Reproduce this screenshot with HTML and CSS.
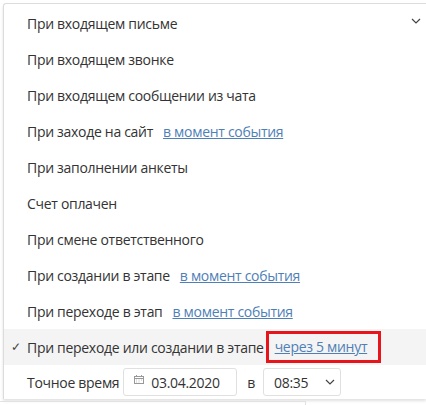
FILE: index.html
```html
<!DOCTYPE html>
<html lang="ru">
<head>
<meta charset="utf-8">
<link rel="stylesheet" href="styles.css">
</head>
<body>
<div class="select">
  <ul class="menu">
    <li class="row first"><span>При входящем письме</span>
      <svg class="chev" width="10" height="6" viewBox="0 0 10 6"><path d="M1 1l4 4 4-4" fill="none" stroke="#444" stroke-width="1.2"/></svg>
    </li>
    <li class="row">При входящем звонке</li>
    <li class="row">При входящем сообщении из чата</li>
    <li class="row">При заходе на сайт <a class="link">в момент события</a></li>
    <li class="row">При заполнении анкеты</li>
    <li class="row">Счет оплачен</li>
    <li class="row">При смене ответственного</li>
    <li class="row">При создании в этапе <a class="link">в момент события</a></li>
    <li class="row">При переходе в этап <a class="link">в момент события</a></li>
    <li class="row selected"><span class="check">✓</span>При переходе или создании в этапе<span class="hl"><a class="link">через 5 минут</a></span></li>
    <li class="row last">Точное время
      <span class="field date">
        <svg class="cal" width="10" height="9" viewBox="0 0 10 9"><rect x="0.5" y="1.5" width="9" height="7" fill="none" stroke="#999"/><path d="M0.5 3.5h9" stroke="#999"/><path d="M2.5 0v2M7.5 0v2" stroke="#999"/><path d="M2 5h1M4.5 5h1M7 5h1M2 7h1M4.5 7h1" stroke="#bbb"/></svg>
        03.04.2020
      </span>
      <span class="at">в</span>
      <span class="field time">08:35
        <svg width="10" height="6" viewBox="0 0 10 6"><path d="M1 1l4 4 4-4" fill="none" stroke="#444" stroke-width="1.2"/></svg>
      </span>
    </li>
  </ul>
</div>
<div class="behind"></div>
</body>
</html>
```
FILE: styles.css
```css
html, body {
  margin: 0;
  background: #fff;
}
body {
  font-family: "Open Sans", "Noto Sans", sans-serif;
  font-size: 14px;
  letter-spacing: -0.3px;
  color: #333;
  overflow: hidden;
  height: 405px;
}
.select {
  margin: 3px 0 0 3px;
  border-left: 1px solid #dcdcdc;
  border-top: 1px solid #dcdcdc;
  border-top-left-radius: 3px;
  padding-top: 1px;
  box-shadow: 0 2px 3px rgba(0, 0, 0, 0.12);
}
.menu {
  list-style: none;
  margin: 0;
  padding: 0;
}
.row {
  height: 36px;
  display: flex;
  align-items: center;
  padding-left: 23px;
  white-space: nowrap;
  position: relative;
}
.row.first {
  justify-content: space-between;
  padding-right: 5px;
}
.chev {
  margin-top: -4px;
}
.link {
  color: #4f7fb6;
  text-decoration: underline;
  margin-left: 10px;
  cursor: pointer;
}
.selected {
  background: #f4f4f4;
}
.check {
  position: absolute;
  left: 7px;
  top: 9px;
  font-size: 12px;
  color: #444;
}
.hl {
  border: 3px solid #e8141b;
  margin-left: 2px;
  padding: 3px 11px 3px 3px;
  line-height: 20px;
}
.hl .link {
  margin-left: 3px;
}
.row.last {
  height: 34px;
}
.field {
  display: inline-flex;
  align-items: center;
  height: 28px;
  box-sizing: border-box;
  border: 1px solid #e0e0e0;
  border-radius: 3px;
  background: #fff;
}
.date {
  margin-left: 4px;
  width: 114px;
  padding-left: 10px;
}
.cal {
  margin-right: 7px;
  margin-top: -6px;
}
.at {
  margin: 0 8px 0 10px;
}
.time {
  width: 78px;
  padding-left: 10px;
  justify-content: flex-start;
}
.time svg {
  margin-left: 17px;
}
.behind {
  margin-top: 2px;
  width: 305px;
  height: 10px;
  border-top: 1px solid #e2e2e2;
  border-right: 1px solid #e2e2e2;
}
```
